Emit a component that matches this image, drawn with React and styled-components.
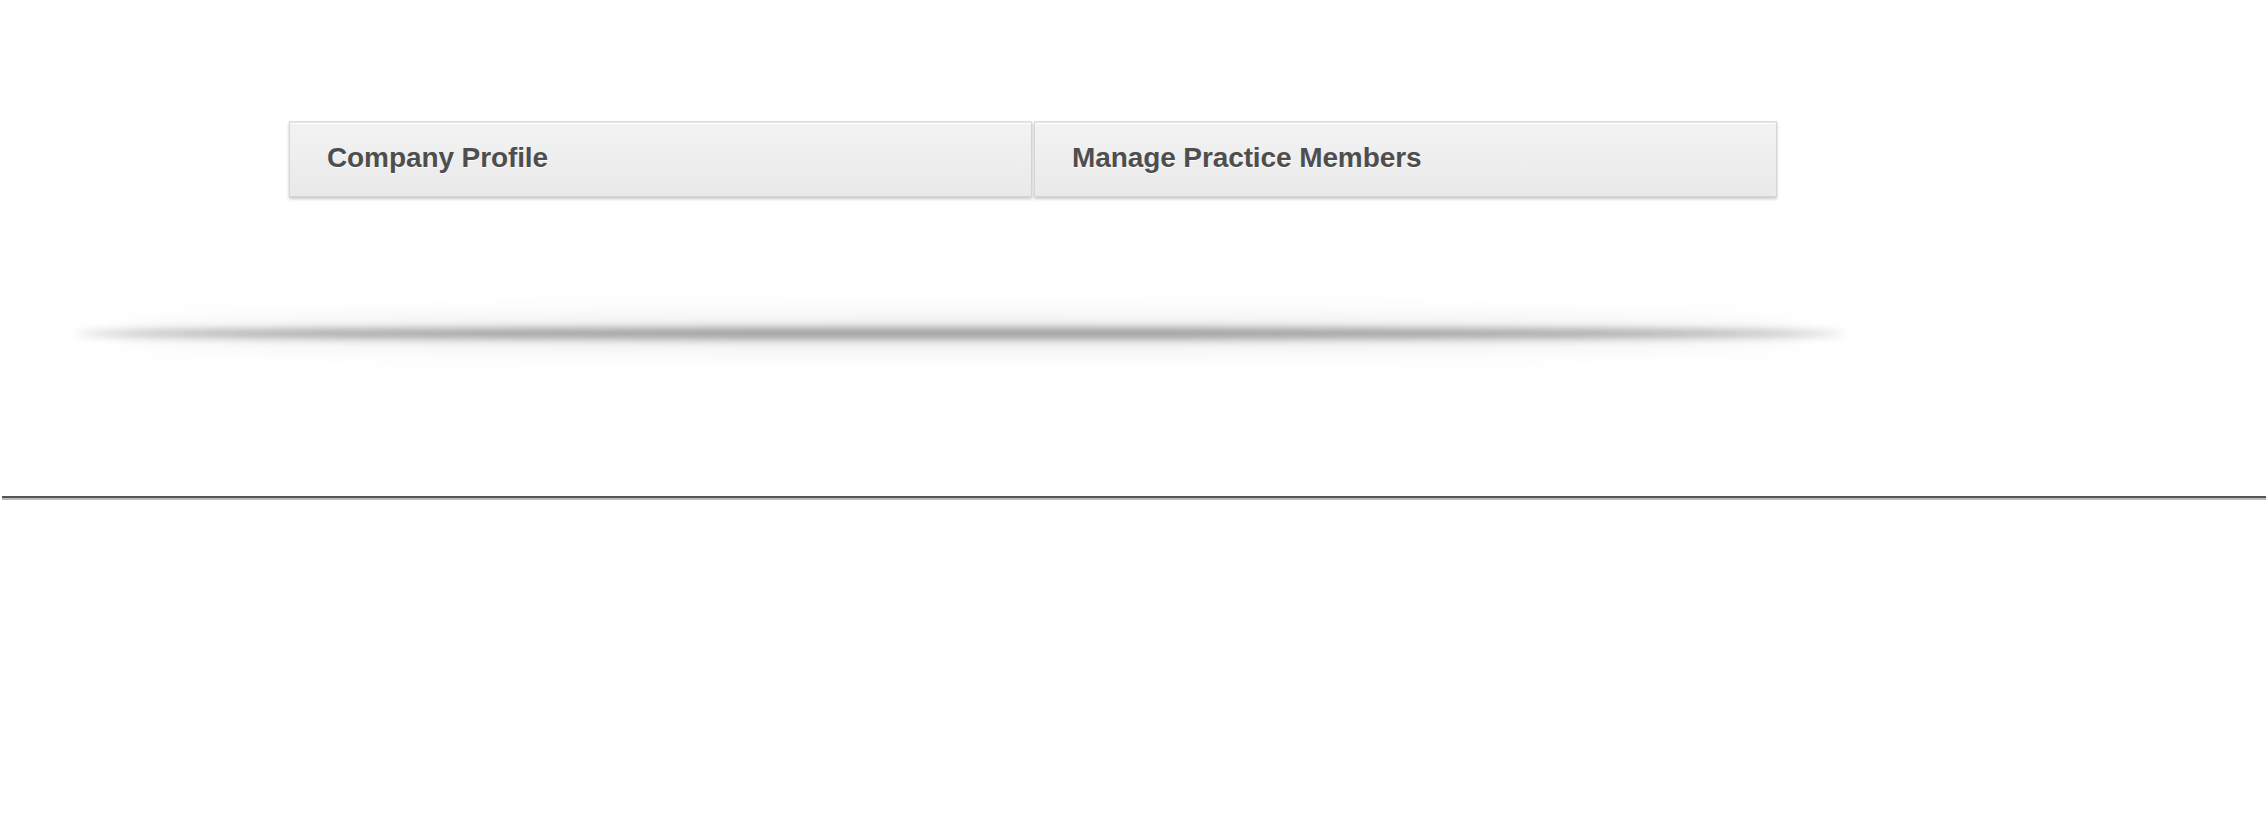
import React from "react";
import styled, { createGlobalStyle } from "styled-components";

const Global = createGlobalStyle`
  html, body { margin: 0; padding: 0; background: #ffffff; }
  body { font-family: "Liberation Sans", Arial, Helvetica, sans-serif; }
`;

const Page = styled.div`
  width: 2266px;
  min-height: 840px;
  padding-top: 121px;
  box-sizing: border-box;
`;

const Tabs = styled.nav`
  display: flex;
  gap: 2px;
  margin-left: 289px;
  width: 1488px;
`;

const Tab = styled.a`
  flex: 1;
  height: 76px;
  box-sizing: border-box;
  display: flex;
  align-items: center;
  padding: 0 0 4px 37px;
  border: 1px solid #d6d6d6;
  border-top: 2px solid #e2e2e2;
  background: linear-gradient(#f3f3f3, #e9e9e9);
  box-shadow: inset 0 1px 0 #ffffff, 0 2px 3px rgba(0, 0, 0, 0.22);
  font-size: 28px;
  font-weight: bold;
  letter-spacing: -0.1px;
  color: #4e4e4e;
  text-shadow: 0 1px 0 #ffffff;
  text-decoration: none;
  cursor: pointer;
`;

const ShadowWrap = styled.div`
  display: grid;
  align-items: center;
  justify-items: center;
  height: 60px;
  width: 1768px;
  margin: 106px 0 0 76px;
`;

const ShadowHalo = styled.div`
  grid-area: 1 / 1;
  width: 1690px;
  height: 34px;
  border-radius: 50%;
  background: rgba(0, 0, 0, 0.07);
  filter: blur(12px);
`;

const ShadowCore = styled.div`
  grid-area: 1 / 1;
  width: 1768px;
  height: 11px;
  border-radius: 50%;
  background: rgba(0, 0, 0, 0.36);
  filter: blur(4px);
`;

const Rule = styled.hr`
  margin: 133px 0 0 2px;
  height: 0;
  border: 0;
  border-top: 2px solid #555555;
  border-bottom: 2px solid #bbbbbb;
`;

export default function App() {
  return (
    <>
      <Global />
      <Page>
        <Tabs>
          <Tab>Company Profile</Tab>
          <Tab>Manage Practice Members</Tab>
        </Tabs>
        <ShadowWrap>
          <ShadowHalo />
          <ShadowCore />
        </ShadowWrap>
        <Rule />
      </Page>
    </>
  );
}
